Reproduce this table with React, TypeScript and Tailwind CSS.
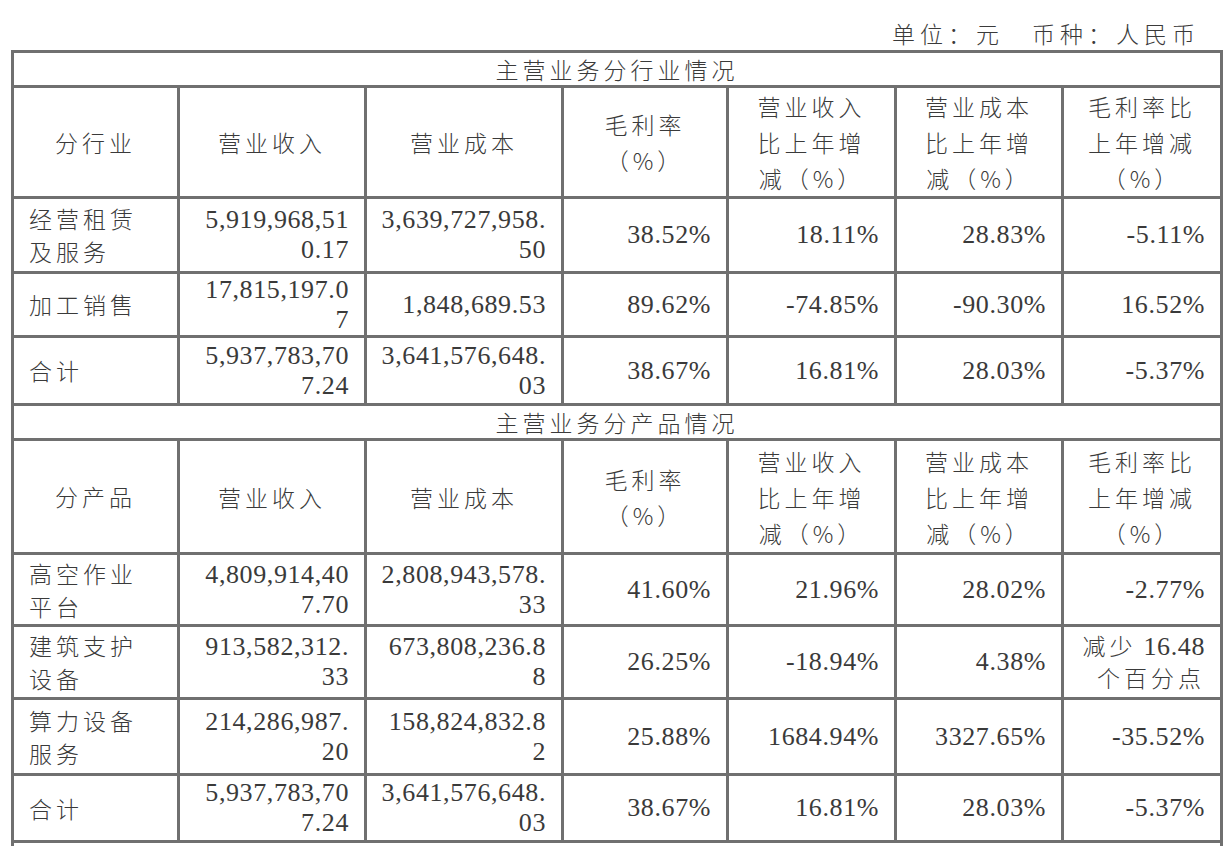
import type { ReactNode } from 'react'

type Cell = ReactNode | ReactNode[]

type Row = { h: string; cells: Cell[] }

const cn = "font-['Noto_Sans_CJK_SC',sans-serif] font-light tracking-[4px]"
const num = "font-['Liberation_Serif','Noto_Sans_CJK_SC',serif] text-[26px] tracking-[0.6px]"
const td = 'border-[3px] border-[#707070] align-middle'

const heads = [
  ['营业收入'],
  ['营业成本'],
  ['毛利率', '（%）'],
  ['营业收入', '比上年增', '减（%）'],
  ['营业成本', '比上年增', '减（%）'],
  ['毛利率比', '上年增减', '（%）'],
]

const industry: Row[] = [
  {
    h: 'h-[75px]',
    cells: [['经营租赁', '及服务'], ['5,919,968,51', '0.17'], ['3,639,727,958.', '50'], '38.52%', '18.11%', '28.83%', '-5.11%'],
  },
  {
    h: 'h-[64px]',
    cells: [['加工销售'], ['17,815,197.0', '7'], ['1,848,689.53'], '89.62%', '-74.85%', '-90.30%', '16.52%'],
  },
  {
    h: 'h-[68px]',
    cells: [['合计'], ['5,937,783,70', '7.24'], ['3,641,576,648.', '03'], '38.67%', '16.81%', '28.03%', '-5.37%'],
  },
]

const product: Row[] = [
  {
    h: 'h-[72px]',
    cells: [['高空作业', '平台'], ['4,809,914,40', '7.70'], ['2,808,943,578.', '33'], '41.60%', '21.96%', '28.02%', '-2.77%'],
  },
  {
    h: 'h-[73px]',
    cells: [
      ['建筑支护', '设备'],
      ['913,582,312.', '33'],
      ['673,808,236.8', '8'],
      '26.25%',
      '-18.94%',
      '4.38%',
      [
        <>
          <span className={`${cn} text-[23px] tracking-[0px]`}>减少</span> 16.48
        </>,
        <span className={`${cn} text-[23px] tracking-[3px]`}>个百分点</span>,
      ],
    ],
  },
  {
    h: 'h-[76px]',
    cells: [['算力设备', '服务'], ['214,286,987.', '20'], ['158,824,832.8', '2'], '25.88%', '1684.94%', '3327.65%', '-35.52%'],
  },
  {
    h: 'h-[67px]',
    cells: [['合计'], ['5,937,783,70', '7.24'], ['3,641,576,648.', '03'], '38.67%', '16.81%', '28.03%', '-5.37%'],
  },
]

function Lines({ v }: { v: Cell }) {
  const list = Array.isArray(v) ? v : [v]
  return (
    <>
      {list.map((l, i) => (
        <div key={i} className="whitespace-nowrap">{l}</div>
      ))}
    </>
  )
}

function Section({ title, first, h, rows }: { title: string; first: string; h: string; rows: Row[] }) {
  return (
    <>
      <tr className="h-[35px]">
        <td colSpan={7} className={`${td} ${cn} text-center leading-[28px]`}>{title}</td>
      </tr>
      <tr className={h}>
        <td className={`${td} ${cn} text-center leading-[35px]`}>{first}</td>
        {heads.map((lines, i) => (
          <td key={i} className={`${td} ${cn} text-center leading-[36px]`}>
            <Lines v={lines} />
          </td>
        ))}
      </tr>
      {rows.map((r, i) => (
        <tr key={i} className={r.h}>
          {r.cells.map((c, j) =>
            j === 0 ? (
              <td key={j} className={`${td} ${cn} pl-[15px] text-left leading-[33px]`}>
                <Lines v={c} />
              </td>
            ) : (
              <td key={j} className={`${td} ${num} pr-[15px] text-right leading-[30px]`}>
                <Lines v={c} />
              </td>
            )
          )}
        </tr>
      ))}
    </>
  )
}

export default function App() {
  return (
    <div className="min-h-screen bg-white text-[23px] text-[#3a3a3a]">
      <div className="pr-[32px] pt-[16px] text-right font-['Noto_Sans_CJK_SC',sans-serif] font-light leading-[34px] tracking-[5px]">
        单位：元　币种：人民币
      </div>
      <div className="pl-[11px] pr-[9px]">
        <table className="w-full table-fixed border-collapse">
          <colgroup>
            <col className="w-[166px]" />
            <col className="w-[187px]" />
            <col className="w-[197px]" />
            <col className="w-[165px]" />
            <col className="w-[168px]" />
            <col className="w-[167px]" />
            <col />
          </colgroup>
          <tbody>
            <Section title="主营业务分行业情况" first="分行业" h="h-[111px]" rows={industry} />
            <Section title="主营业务分产品情况" first="分产品" h="h-[114px]" rows={product} />
            <tr className="h-[40px]">
              <td colSpan={7} className={td}></td>
            </tr>
          </tbody>
        </table>
      </div>
    </div>
  )
}
